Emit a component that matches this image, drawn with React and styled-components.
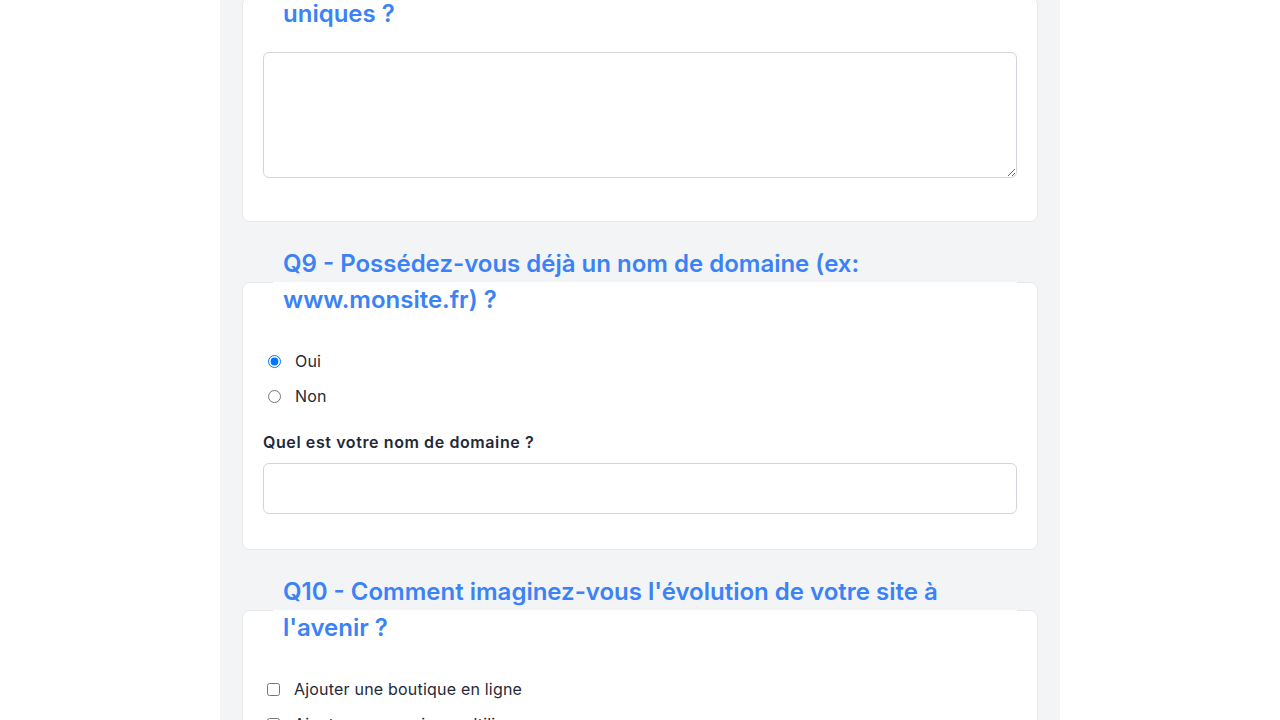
import React from "react";
import styled, { createGlobalStyle } from "styled-components";

const GlobalStyle = createGlobalStyle`
  html, body {
    margin: 0;
    padding: 0;
    background: #ffffff;
    font-family: "Inter", "Noto Sans", sans-serif;
    color: #1f2937;
  }
  * { box-sizing: border-box; }
`;

const Page = styled.main`
  width: 840px;
  margin: -40px auto 0;
  padding: 0 22px 40px;
  background: #f3f4f6;
  min-height: 900px;
`;

const Card = styled.fieldset`
  margin: 0 0 24px;
  padding: 0 20px 20px;
  min-width: 0;
  border: 1px solid #e5e7eb;
  border-radius: 8px;
  background: #ffffff;
`;

const Legend = styled.legend`
  margin-left: 10px;
  padding: 0 10px;
  font-family: "Inter", sans-serif;
  font-weight: 600;
  font-size: 24px;
  line-height: 36px;
  color: #3b82f6;
`;

const Field = styled.div`
  margin-top: ${(p) => p.$top || 0}px;
  margin-bottom: ${(p) => p.$bottom || 0}px;
`;

const TextArea = styled.textarea`
  display: block;
  width: 100%;
  height: 126px;
  padding: 10px 12px;
  border: 1px solid #d1d5db;
  border-radius: 6px;
  font-family: "Inter", sans-serif;
  font-size: 16px;
  background: #ffffff;
  resize: vertical;
  outline: none;
`;

const Input = styled.input`
  display: block;
  width: 100%;
  height: 51px;
  padding: 0 12px;
  border: 1px solid #d1d5db;
  border-radius: 6px;
  font-family: "Inter", sans-serif;
  font-size: 16px;
  background: #ffffff;
  outline: none;
`;

const FieldLabel = styled.label`
  display: block;
  margin-bottom: 9px;
  font-family: "Inter", sans-serif;
  font-weight: 600;
  font-size: 16px;
  line-height: 24px;
  letter-spacing: 0.6px;
  color: #1f2937;
`;

const OptionList = styled.div`
  display: flex;
  flex-direction: column;
  gap: 11px;
  margin-top: 31px;
`;

const Option = styled.label`
  display: flex;
  align-items: center;
  font-family: "Inter", sans-serif;
  font-size: 16px;
  font-weight: 400;
  line-height: 24px;
  letter-spacing: 0.2px;
  color: #1f2937;
`;

const Radio = styled.input.attrs({ type: "radio" })`
  width: 13px;
  height: 13px;
  margin: 0 14px 0 5px;
  flex: none;
`;

const Checkbox = styled.input.attrs({ type: "checkbox" })`
  width: 13px;
  height: 13px;
  margin: 0 14px 0 4px;
  flex: none;
`;

const evolutions = [
  "Ajouter une boutique en ligne",
  "Ajouter une version multilingue",
  "Ajouter un espace client",
  "Ajouter un blog / des actualités",
];

export default function App() {
  return (
    <>
      <GlobalStyle />
      <Page>
        <Card>
          <Legend>
            Q8 - Qu'est-ce qui rend vos produits ou services
            <br />
            uniques ?
          </Legend>
          <Field $top={20} $bottom={23}>
            <TextArea />
          </Field>
        </Card>

        <Card>
          <Legend>Q9 - Possédez-vous déjà un nom de domaine (ex: www.monsite.fr) ?</Legend>
          <OptionList>
            <Option>
              <Radio name="domaine" defaultChecked />
              Oui
            </Option>
            <Option>
              <Radio name="domaine" />
              Non
            </Option>
          </OptionList>
          <Field $top={22} $bottom={15}>
            <FieldLabel htmlFor="domaine-nom">Quel est votre nom de domaine ?</FieldLabel>
            <Input id="domaine-nom" type="text" />
          </Field>
        </Card>

        <Card>
          <Legend>Q10 - Comment imaginez-vous l'évolution de votre site à l'avenir ?</Legend>
          <OptionList>
            {evolutions.map((e) => (
              <Option key={e}>
                <Checkbox />
                {e}
              </Option>
            ))}
          </OptionList>
        </Card>
      </Page>
    </>
  );
}
